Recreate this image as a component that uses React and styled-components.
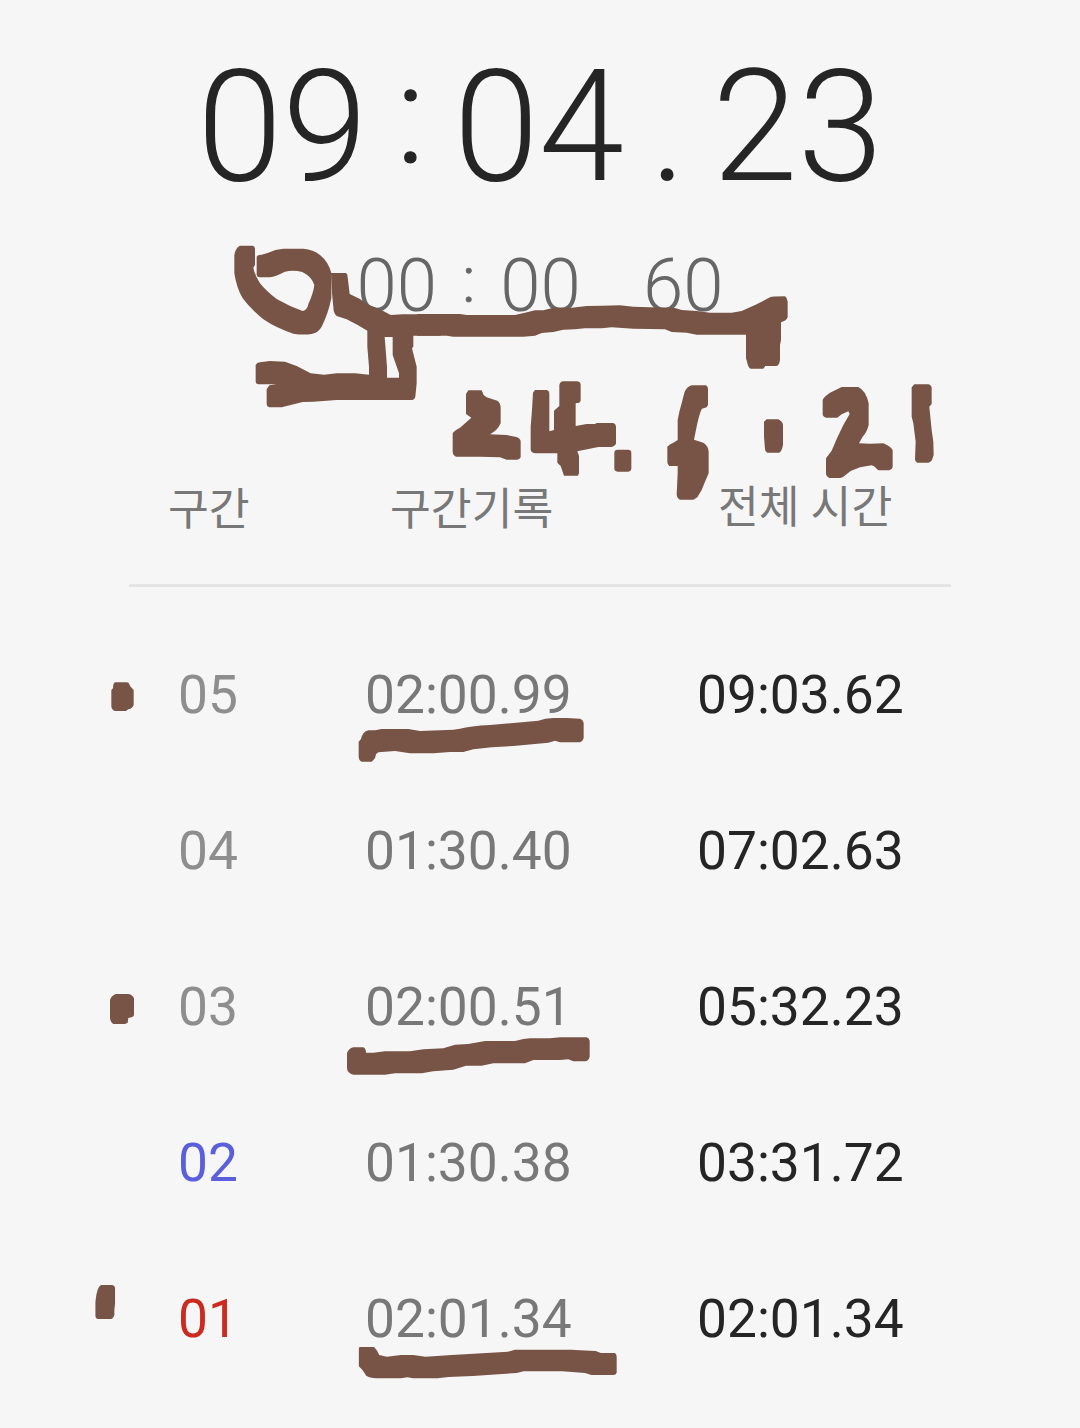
import React from 'react';
import styled, { createGlobalStyle } from 'styled-components';

const GlobalStyle = createGlobalStyle`
  * {
    box-sizing: border-box;
  }
  body {
    margin: 0;
    background: #f6f6f6;
    font-family: Roboto, 'Noto Sans CJK KR', sans-serif;
  }
`;

const Screen = styled.main`
  position: relative;
  width: 1080px;
  height: 1428px;
  padding-top: 47px;
  overflow: hidden;
  background: #f6f6f6;
`;

const Clock = styled.div`
  display: flex;
  justify-content: center;
  height: ${(props) => (props.$small ? '80px' : '160px')};
  font-size: ${(props) => (props.$small ? '74px' : '155px')};
  line-height: ${(props) => (props.$small ? '80px' : '160px')};
  margin-top: ${(props) => (props.$small ? '39px' : '0')};
  font-weight: 300;
  color: ${(props) => (props.$small ? '#666666' : '#252525')};
  transform: scaleX(${(props) => (props.$small ? 0.98 : 0.993)});
`;

const Separator = styled.span`
  width: ${(props) => props.$width}px;
  text-align: center;
`;

// the colon is smaller than the digits and sits above the baseline
const Colon = styled.span`
  display: block;
  font-size: 0.885em;
  transform: translateY(-0.085em);
  -webkit-text-stroke: 0.009em currentColor;
`;

const Laps = styled.section`
  width: 822px;
  margin: 149px auto 0;
`;

const LapHeader = styled.div`
  display: grid;
  grid-template-columns: 222px 328px 1fr;
  height: 112px;
  padding: 1px 0 0 39px;
  border-bottom: 3px solid #e4e4e4;
  font-family: 'Noto Sans CJK KR', sans-serif;
  font-size: 44.4px;
  line-height: 60px;
  color: #787878;
  white-space: nowrap;
`;

const HeaderCell = styled.span`
  margin-top: ${(props) => (props.$raised ? '-2px' : '0')};
  word-spacing: 1px;
`;

const LapList = styled.div`
  padding-top: 30px;
`;

const LapRow = styled.div`
  display: grid;
  grid-template-columns: 187px 332px 1fr;
  padding-left: 49px;
  font-size: 53.3px;
  line-height: 156px;
`;

const LapNumber = styled.span`
  color: ${(props) => props.$color || '#8e8e8e'};
`;

const LapTime = styled.span`
  color: #787878;
`;

const TotalTime = styled.span`
  color: #252525;
`;

const InkLayer = styled.svg`
  position: absolute;
  top: 0;
  left: 0;
  fill: #785447;
  fill-rule: evenodd;
  pointer-events: none;
`;

const laps = [
  { number: '05', lap: '02:00.99', total: '09:03.62' },
  { number: '04', lap: '01:30.40', total: '07:02.63' },
  { number: '03', lap: '02:00.51', total: '05:32.23' },
  { number: '02', lap: '01:30.38', total: '03:31.72', color: '#5c5fdc' },
  { number: '01', lap: '02:01.34', total: '02:01.34', color: '#cb2a1f' },
];

// marker notes drawn over the stopwatch
function Ink() {
  return (
    <InkLayer width="1080" height="1428" viewBox="0 0 1080 1428" aria-hidden="true">
      <g transform="translate(220 230) scale(0.33333)">
        <path d="M60 47H98Q105 48 105 56V105L100 113Q104 135 120 160Q140 185 170 207Q210 230 248 243Q262 240 265 222Q280 190 283 165Q275 140 247 126Q220 119 195 125Q165 140 150 142H118Q110 141 110 134V80Q112 74 125 74L145 68Q165 58 190 56H250Q280 58 300 75Q325 95 334 129V205Q325 250 305 290Q295 308 275 312Q250 316 220 311Q170 295 130 268Q90 235 68 205Q50 175 43 130V75Q47 52 60 47Z" />
        <path d="M333 129H378Q383 132 383 142L389 192L420 207L440 222L480 238L512 255L548 253H662V317H580V350L576 355L590 410V460L586 500Q584 509 575 510H350L280 515L248 516L185 532H148Q140 530 140 523V478L148 466L170 463H115Q107 462 107 455V405Q110 398 120 397L150 393L195 395L230 408L272 430L312 434L350 430H405L447 434V410L442 350V302L413 285L380 268L350 258Q340 250 340 230L336 190ZM494 321H518V375L537 430V443H501V410Z" />
      </g>
      <g transform="translate(420 230) scale(0.33333)">
        <path d="M-8 252H120L140 255H285L315 248L345 241H370L400 233H455L500 228L545 227L600 226L640 230L690 232L765 234L785 240L830 243L870 248H935L965 243L1010 223L1050 202Q1056 199 1095 199Q1103 204 1103 215V262Q1100 272 1083 277V330L1080 345V390Q1077 408 1068 408H1036L1030 416H992Q985 414 981 395L978 385V314H830L800 308L755 306L735 298L640 296L575 292L545 295H495L465 298L430 299L400 306L365 309L345 317L310 320H100L80 317H-8Z" />
      </g>
      <g transform="translate(440 370) scale(0.33333)">
        <path d="M85 61H125L131 75L140 82L172 92Q182 98 182 115V160Q172 182 150 193L200 195L232 202Q242 207 242 215V262Q240 268 232 269H200L180 262L120 260H48Q38 255 38 245V190Q42 182 60 173L94 143L78 132V72Z" />
        <path d="M285 60H320Q328 62 328 72V184L342 180V122L358 108V45Q360 35 370 34H412Q422 36 422 45V92L418 98L407 100V168L440 162H465L470 159H520Q528 162 528 172V222Q522 230 515 231H475L412 244L417 258V310L414 317H372L362 288L352 278V250H285Q272 248 272 238V170L276 120L279 68Z" />
        <rect x="523" y="239" width="51" height="66" rx="10" />
      </g>
      <g transform="translate(650 370) scale(0.33333)">
        <path d="M125 46H168Q174 50 174 57V105L170 112L156 116Q150 125 142 160L132 209L160 218Q175 228 176 245V310L165 335L155 360L142 382L130 389H90Q80 384 80 372L83 310V288H58Q52 284 52 275V230Q58 223 70 218L83 210V150Q88 122 95 100L103 68Q110 50 125 46Z" />
        <path d="M350 148H385Q398 155 399 165V225Q395 245 388 248H352Q345 246 345 238L342 200V155Z" />
        <path d="M518 90Q522 80 540 68L575 51H625Q648 62 656 100V165Q650 188 638 200L627 220L660 221L700 220Q720 228 728 240V292Q725 300 718 301H685L672 289L665 286L630 292L602 303L578 322L570 324H538Q528 320 528 310V265L545 242Q560 205 580 165L599 132L595 124L575 133L562 143H528Q518 140 518 132Z" />
        <path d="M793 43H835Q845 46 845 54V102L838 110L845 180L850 215L851 255L846 270Q842 277 835 278H802Q795 275 795 268L797 215L790 160L785 140V52Z" />
      </g>
      <g transform="translate(80 640) scale(0.33333)">
        <path d="M105 127H140Q148 128 150 138L161 150V195Q158 205 145 208L138 213H105Q94 209 94 198V150L99 145Q99 130 105 127Z" />
        <path d="M836 305L843 297Q848 275 865 271H885L905 267H985L1020 273L1120 269L1140 266Q1170 258 1230 255L1375 242Q1395 234 1420 234H1460L1500 236Q1510 240 1511 250V295Q1508 305 1500 307H1440L1425 302L1405 308L1300 318L1235 322L1180 328L1150 336H1110L1060 340H990L945 333L895 337L888 343L885 355L875 365H845Q837 362 836 350Z" />
      </g>
      <g transform="translate(80 960) scale(0.33333)">
        <path d="M108 102H145Q158 104 162 115V165Q160 173 145 174L143 188L135 192H100Q92 188 90 175V120Q94 106 108 102Z" />
        <path d="M820 262H850Q858 266 858 278H880L915 274H990L1030 268L1090 265L1125 254L1165 252L1215 243H1305L1330 237L1350 235H1410L1440 232H1520Q1528 234 1529 242V290Q1526 303 1515 304H1480L1465 298L1440 300H1360L1335 310H1240L1205 317H1158L1120 329L1060 334L1025 340H945L915 344H820Q802 340 801 325V280Q805 266 820 262Z" />
      </g>
      <g transform="translate(80 1270) scale(0.35077 0.33333)">
        <path d="M60 45H92Q100 47 100 55V100L98 120V135Q94 147 88 147H50Q44 145 44 138V95Q48 50 60 45Z" />
        <path d="M797 231H838L847 242L853 255L875 260L915 255H950L985 260L1060 255L1220 245L1240 239H1400L1425 241L1470 243L1485 249H1525Q1530 252 1530 260V308Q1528 315 1520 315H1458L1440 309L1375 304H1265L1245 309L1120 318L1050 321L1020 325H950L933 322L915 325H845Q825 323 816 317L806 301L795 289V235Z" />
      </g>
    </InkLayer>
  );
}

export default function App() {
  return (
    <Screen>
      <GlobalStyle />
      <Clock>
        <span>09</span>
        <Separator $width={86.3}>
          <Colon>:</Colon>
        </Separator>
        <span>04</span>
        <Separator $width={88.8}>.</Separator>
        <span>23</span>
      </Clock>
      <Clock $small>
        <span>00</span>
        <Separator $width={64.5}>
          <Colon>:</Colon>
        </Separator>
        <span>00</span>
        <Separator $width={63.5} />
        <span>60</span>
      </Clock>
      <Laps>
        <LapHeader>
          <HeaderCell>구간</HeaderCell>
          <HeaderCell>구간기록</HeaderCell>
          <HeaderCell $raised>전체 시간</HeaderCell>
        </LapHeader>
        <LapList>
          {laps.map((item) => (
            <LapRow key={item.number}>
              <LapNumber $color={item.color}>{item.number}</LapNumber>
              <LapTime>{item.lap}</LapTime>
              <TotalTime>{item.total}</TotalTime>
            </LapRow>
          ))}
        </LapList>
      </Laps>
      <Ink />
    </Screen>
  );
}
